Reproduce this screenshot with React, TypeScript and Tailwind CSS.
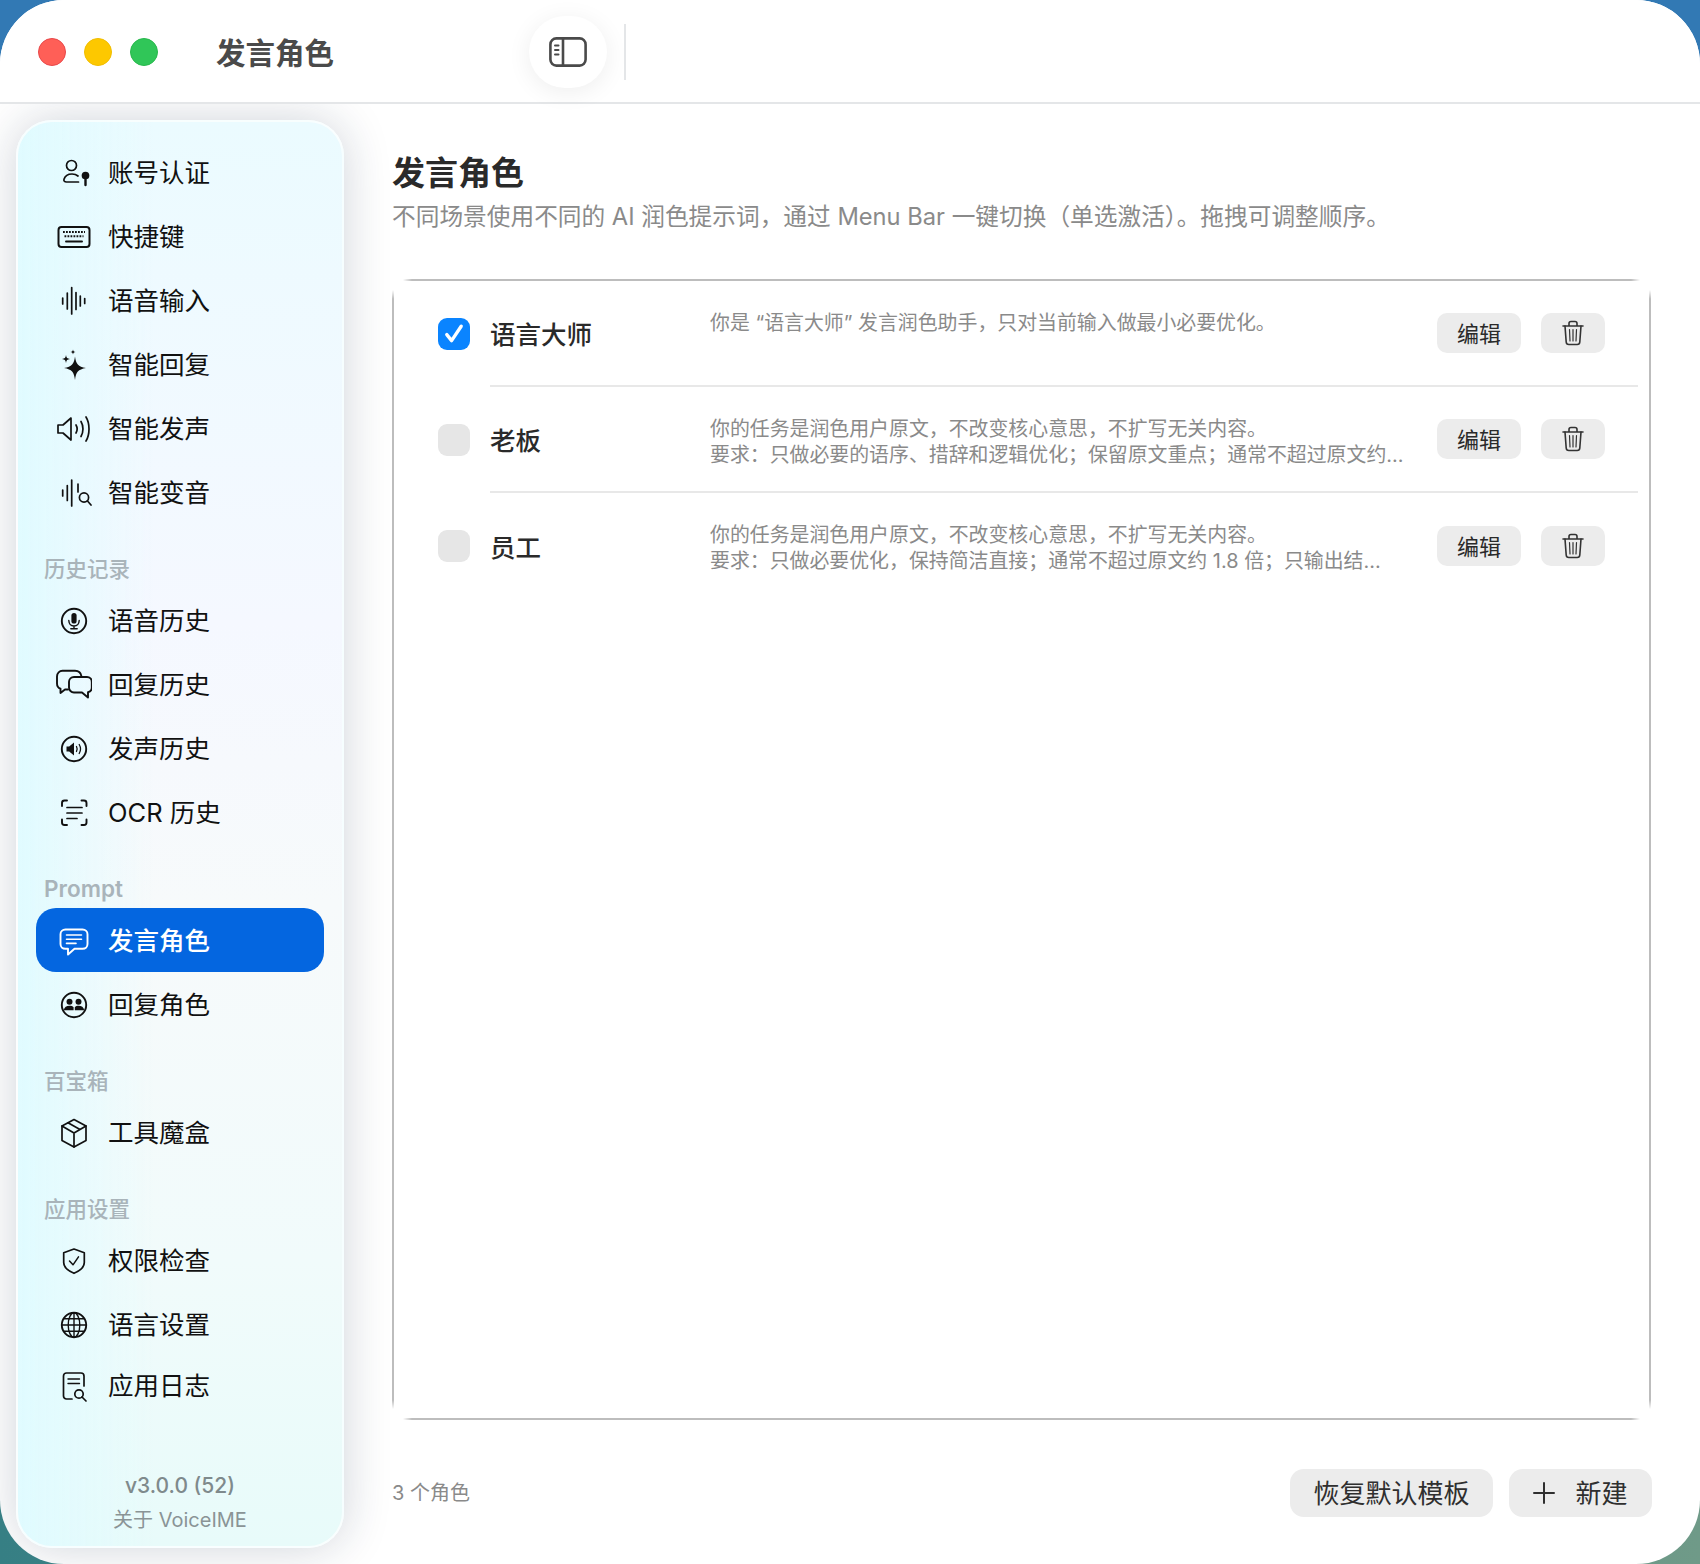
import type { ReactNode } from "react";

const Ico = ({ children, className = "text-[#111]" }: { children: ReactNode; className?: string }) => (
  <svg viewBox="0 0 36 36" className={`w-9 h-9 shrink-0 mt-0.5 ${className}`} fill="none" stroke="currentColor" strokeWidth="1.7" strokeLinecap="round" strokeLinejoin="round">
    {children}
  </svg>
);

const PersonKey = () => (
  <Ico>
    <circle cx="15.5" cy="10.5" r="5" />
    <path d="M22.5 27H10.5C8.5 27 7.5 26 8 24.3C9 21 12 19 16 19C18.5 19 20.5 19.7 22 21" />
    <circle cx="29.5" cy="20.5" r="3" fill="currentColor" />
    <path d="M29.5 22V30" strokeWidth="2.4" />
  </Ico>
);
const Keyboard = () => (
  <Ico>
    <rect x="2.5" y="8" width="31" height="20" rx="3" strokeWidth="2" />
    <path d="M7 13H29M8.5 17.2H27.5" strokeWidth="2.1" strokeDasharray="1.8 1.2" strokeLinecap="butt" />
    <path d="M10 22.5H26" strokeWidth="1.9" />
  </Ico>
);
const Wave = () => (
  <Ico>
    <path d="M6.7 15V21M11.3 10V26M15.7 4.5V31M20 9.5V26.5M24.3 13V23M28.7 15.5V20.5" />
  </Ico>
);
const Sparkles = () => (
  <Ico>
    <path d="M19 9.5C20 17 22 19.5 30 21C22 22.5 20 25 19 33C18 25 16 22.5 8 21C16 19.5 18 17 19 9.5Z" fill="currentColor" stroke="none" />
    <path d="M10 8C10.4 10.8 11.2 11.6 14 12C11.2 12.4 10.4 13.2 10 16C9.6 13.2 8.8 12.4 6 12C8.8 11.6 9.6 10.8 10 8Z" fill="currentColor" stroke="none" />
    <path d="M17 2.5C17.2 4 18 4.8 19.5 5C18 5.2 17.2 6 17 7.5C16.8 6 16 5.2 14.5 5C16 4.8 16.8 4 17 2.5Z" fill="currentColor" stroke="none" />
  </Ico>
);
const Speaker = () => (
  <Ico>
    <path d="M2 14V22H7L15 29V7L7 14H2Z" />
    <path d="M20 14C21.4 16.4 21.4 19.6 20 22" />
    <path d="M25 10.5C27.6 14.8 27.6 21.2 25 25.5" />
    <path d="M30 6C34 12.5 34 23.5 30 30" />
  </Ico>
);
const WaveSearch = () => (
  <Ico>
    <path d="M6.7 15V21M11.3 10.5V25.5M15.7 5V31M22 9V17" />
    <circle cx="28" cy="22.5" r="4.6" />
    <path d="M31.5 26L35 30" />
  </Ico>
);
const MicCircle = () => (
  <Ico>
    <circle cx="18" cy="18" r="12.2" strokeWidth="1.9" />
    <rect x="15.4" y="10" width="5.2" height="10.5" rx="2.6" fill="currentColor" stroke="none" />
    <path d="M12.8 17.5C13 21 15 23 18 23C21 23 23 21 23.2 17.5M18 23V25.6M14.8 25.8H21.2" strokeWidth="1.4" />
  </Ico>
);
const Bubbles = () => (
  <Ico>
    <path d="M12 22.5H9L4.5 26V21.7C2.5 21 1 19 1 16.5V9.5C1 6 3.5 3.8 6.5 3.8H19C22.5 3.8 25 6 25.5 9.5" strokeWidth="1.9" />
    <path d="M18 10H31C33.8 10 35.8 12 35.8 15V20.5C35.8 23 34.5 24.7 32 25.2V30.5L26 25.5H18C15.2 25.5 13 23.2 13 20.5V15C13 12 15.2 10 18 10Z" strokeWidth="1.9" />
  </Ico>
);
const SpeakerCircle = () => (
  <Ico>
    <circle cx="18" cy="18" r="12.2" strokeWidth="1.9" />
    <path d="M10.5 15.5V20.5H13.2L18 24.5V11.5L13.2 15.5H10.5Z" fill="currentColor" stroke="none" />
    <path d="M20.5 15.5C21.3 17 21.3 19 20.5 20.5M23.2 13.5C24.8 16.2 24.8 19.8 23.2 22.5" strokeWidth="1.3" />
  </Ico>
);
const ScanText = () => (
  <Ico>
    <path d="M11 5.5H8.5C7 5.5 6 6.5 6 8V11M25.5 5.5H28C29.5 5.5 30.5 6.5 30.5 8V11M6 24.5V27.5C6 29 7 30 8.5 30H11M30.5 24.5V27.5C30.5 29 29.5 30 28 30H25.5" strokeWidth="1.9" />
    <path d="M11 12.5H26M11 18H26M11 23.5H21" />
  </Ico>
);
const TextBubble = () => (
  <Ico className="text-white">
    <path d="M9.5 6.5H26.5C29.5 6.5 31.5 8.5 31.5 11.2V21C31.5 23.8 29.5 25.8 26.5 25.8H18.5L12 31.5V25.8H9.5C6.5 25.8 4.5 23.8 4.5 21V11.2C4.5 8.5 6.5 6.5 9.5 6.5Z" strokeWidth="1.9" />
    <path d="M10.5 12H25.5M10.5 16.2H25.5M10.5 20.4H20" strokeWidth="1.6" />
  </Ico>
);
const PeopleCircle = () => (
  <Ico>
    <circle cx="18" cy="18" r="12.2" strokeWidth="1.9" />
    <circle cx="13.5" cy="14.8" r="3" fill="currentColor" stroke="none" />
    <circle cx="22.5" cy="14.8" r="3" fill="currentColor" stroke="none" />
    <path d="M7.8 23.2C8.2 20.2 10.5 18.8 13.5 18.8C15.2 18.8 16.6 19.2 17.6 20.2V23.2H7.8ZM18.8 23.2V20.2C19.8 19.2 20.9 18.8 22.5 18.8C25.5 18.8 27.8 20.2 28.2 23.2H18.8Z" fill="currentColor" stroke="none" />
  </Ico>
);
const Box = () => (
  <Ico>
    <path d="M18 4.5L30 11V25.5L18 32L6 25.5V11L18 4.5Z" />
    <path d="M6 11L18 18L30 11M18 18V32M12 7.8L24 14.6" />
  </Ico>
);
const ShieldCheck = () => (
  <Ico>
    <path d="M18 6L28.3 9.8V19.5C28.3 24 24.5 27.5 18 30.3C11.5 27.5 7.7 24 7.7 19.5V9.8L18 6Z" />
    <path d="M13.5 18L17 21.8L22.5 13.8" strokeWidth="1.5" />
  </Ico>
);
const Globe = () => (
  <Ico>
    <circle cx="18" cy="18" r="12.2" strokeWidth="1.9" />
    <ellipse cx="18" cy="18" rx="5.8" ry="12.2" strokeWidth="1.4" />
    <path d="M18 5.8V30.2M5.8 18H30.2M7.6 11.8H28.4M7.6 24.2H28.4" strokeWidth="1.4" />
  </Ico>
);
const DocSearch = () => (
  <Ico>
    <path d="M16 31H10.5C8.8 31 7.5 29.7 7.5 28V8C7.5 6.3 8.8 5 10.5 5H25C26.7 5 28 6.3 28 8V18" />
    <path d="M12 11H23.5M12 15.5H23.5" strokeWidth="1.4" />
    <circle cx="23" cy="26" r="4.2" />
    <path d="M26 29L30 33" />
  </Ico>
);

const Trash = () => (
  <svg viewBox="0 0 24 26" className="w-6 h-[26px] text-[#333]" fill="none" stroke="currentColor" strokeWidth="1.6" strokeLinecap="round" strokeLinejoin="round">
    <path d="M2 6H22M8 6V3.5C8 2.3 8.8 1.5 10 1.5H14C15.2 1.5 16 2.3 16 3.5V6" />
    <path d="M4 6L5.2 22C5.3 23.6 6.3 24.5 7.8 24.5H16.2C17.7 24.5 18.7 23.6 18.8 22L20 6" />
    <path d="M8.5 9.5L9 21M12 9.5V21M15.5 9.5L15 21" strokeWidth="1.2" />
  </svg>
);

type Item = { label: string; icon: ReactNode; active?: boolean; nudge?: boolean };

const NavRow = ({ item }: { item: Item }) => (
  <div className={`mx-[18px] h-16 pl-5 flex items-center gap-[16px] rounded-[20px] text-[25.5px] ${item.nudge ? "-mt-[3px]" : ""} ${item.active ? "bg-[#0466e0] text-white font-medium" : "text-[#111]"}`}>
    {item.icon}
    <span className="mt-[3px]">{item.label}</span>
  </div>
);

const NavGroup = ({ title, items }: { title: string; items: Item[] }) => (
  <div>
    <div className={`mt-[30px] mb-1 pl-[26px] h-[30px] leading-[30px] text-[#a9b4ba] ${title === "Prompt" ? "text-[22.5px] font-semibold" : "text-[21.5px] font-medium"}`}>{title}</div>
    {items.map((i) => (
      <NavRow key={i.label} item={i} />
    ))}
  </div>
);

const roles = [
  { name: "语言大师", on: true, lines: ["你是 “语言大师” 发言润色助手，只对当前输入做最小必要优化。"] },
  { name: "老板", on: false, lines: ["你的任务是润色用户原文，不改变核心意思，不扩写无关内容。", "要求：只做必要的语序、措辞和逻辑优化；保留原文重点；通常不超过原文约..."] },
  { name: "员工", on: false, lines: ["你的任务是润色用户原文，不改变核心意思，不扩写无关内容。", "要求：只做必要优化，保持简洁直接；通常不超过原文约 1.8 倍；只输出结..."] },
];

const cornerFade = "absolute w-5 h-5";

export default function App() {
  return (
    <div lang="zh-CN" className="w-[1700px] h-[1564px] overflow-hidden bg-[linear-gradient(180deg,#3279b4_0%,#3279b4_50%,rgba(50,121,180,0)_88%),linear-gradient(90deg,#367f84,#6f9a88)] [font-family:Inter,'Noto_Sans_CJK_SC',sans-serif]">
      <div className="h-full rounded-[64px] bg-white overflow-hidden flex flex-col">
        <header className="relative z-10 h-[104px] shrink-0 bg-white border-b-2 border-[#e4e6e8] flex items-center pt-0.5">
          <div className="ml-[38px] flex gap-[18px]">
            <span className="w-7 h-7 rounded-full bg-[#ff5f57] border border-[#e8484a]" />
            <span className="w-7 h-7 rounded-full bg-[#fdc800] border border-[#f0bd00]" />
            <span className="w-7 h-7 rounded-full bg-[#30c658] border border-[#28b84c]" />
          </div>
          <h1 className="ml-[58px] mt-0.5 w-[313px] text-[29.5px] font-bold text-[#4a4a4a]">发言角色</h1>
          <button className="w-[78px] h-[72px] rounded-full bg-white shadow-[0_4px_24px_rgba(0,0,0,0.07)] flex items-center justify-center">
            <svg viewBox="0 0 38 30" className="w-[38px] h-[30px] text-[#4a4a4a]" fill="none" stroke="currentColor" strokeWidth="2.6" strokeLinecap="round">
              <rect x="1.4" y="1.4" width="35.2" height="27.2" rx="6" />
              <path d="M14 2V28" />
              <path d="M6 8.5H9.5M6 13H9.5M6 17.5H9.5" strokeWidth="2" />
            </svg>
          </button>
          <div className="ml-[17px] w-0.5 h-14 bg-[#e4e6e8]" />
        </header>
        <div className="flex-1 flex min-h-0">
          <aside className="ml-4 mt-4 w-[328px] h-[1428px] shrink-0 rounded-[36px] border-2 border-white/70 flex flex-col pt-[18px] shadow-[0_0_48px_rgba(20,40,70,0.2)] bg-[linear-gradient(90deg,#e0fbff_0%,rgba(224,251,255,0)_42%),linear-gradient(180deg,#ebfbff_0%,#f5f8ff_35%,#f7fafb_55%,#f1fbfb_80%,#e8fbfa_100%)]">
            <div>
              <NavRow item={{ label: "账号认证", icon: <PersonKey /> }} />
              <NavRow item={{ label: "快捷键", icon: <Keyboard /> }} />
              <NavRow item={{ label: "语音输入", icon: <Wave /> }} />
              <NavRow item={{ label: "智能回复", icon: <Sparkles /> }} />
              <NavRow item={{ label: "智能发声", icon: <Speaker /> }} />
              <NavRow item={{ label: "智能变音", icon: <WaveSearch /> }} />
            </div>
            <NavGroup title="历史记录" items={[
              { label: "语音历史", icon: <MicCircle /> },
              { label: "回复历史", icon: <Bubbles /> },
              { label: "发声历史", icon: <SpeakerCircle /> },
              { label: "OCR 历史", icon: <ScanText /> },
            ]} />
            <NavGroup title="Prompt" items={[
              { label: "发言角色", icon: <TextBubble />, active: true },
              { label: "回复角色", icon: <PeopleCircle /> },
            ]} />
            <NavGroup title="百宝箱" items={[{ label: "工具魔盒", icon: <Box /> }]} />
            <NavGroup title="应用设置" items={[
              { label: "权限检查", icon: <ShieldCheck /> },
              { label: "语言设置", icon: <Globe /> },
              { label: "应用日志", icon: <DocSearch />, nudge: true },
            ]} />
            <div className="mt-auto pb-[9px] text-center">
              <div className="text-[21px] font-medium leading-[34px] text-[#7f8a8c]">v3.0.0 (52)</div>
              <div className="text-[20px] leading-[34px] text-[#8a9496]">关于 VoiceIME</div>
            </div>
          </aside>

          <main className="flex-1 min-w-0 pl-[48px] pr-[49px] pt-[49px] flex flex-col">
            <h2 className="text-[33px] leading-10 font-bold text-[#2a2a2a]">发言角色</h2>
            <p className="mt-2 text-[23.7px] leading-8 text-[#8a8a8a]">不同场景使用不同的 AI 润色提示词，通过 Menu Bar 一键切换（单选激活）。拖拽可调整顺序。</p>

            <section className="relative mt-[46px] h-[1141px] shrink-0 border-2 border-[#bdbdbd]">
              <span className={`${cornerFade} -top-0.5 -left-0.5 bg-[radial-gradient(circle_at_top_left,white_11px,rgba(255,255,255,0)_20px)]`} />
              <span className={`${cornerFade} -top-0.5 -right-0.5 bg-[radial-gradient(circle_at_top_right,white_11px,rgba(255,255,255,0)_20px)]`} />
              <span className={`${cornerFade} -bottom-0.5 -left-0.5 bg-[radial-gradient(circle_at_bottom_left,white_11px,rgba(255,255,255,0)_20px)]`} />
              <span className={`${cornerFade} -bottom-0.5 -right-0.5 bg-[radial-gradient(circle_at_bottom_right,white_11px,rgba(255,255,255,0)_20px)]`} />
              {roles.map((r, i) => (
                <div key={r.name} className="relative flex pl-[44px] pr-[11px]">
                  {r.on ? (
                    <span className="self-center mr-5 w-8 h-8 rounded-[9px] bg-[#0a84ff] flex items-center justify-center">
                      <svg viewBox="0 0 20 20" className="w-6 h-6" fill="none" stroke="white" strokeWidth="2.8" strokeLinecap="round" strokeLinejoin="round">
                        <path d="M4 10.5L8 15.5L16 3.5" />
                      </svg>
                    </span>
                  ) : (
                    <span className="self-center mr-5 w-8 h-8 rounded-[9px] bg-[#e6e6e6]" />
                  )}
                  <div className={`flex-1 h-[106px] flex items-center pr-[33px] ${i < 2 ? "border-b-2 border-[#e8e8e8]" : ""}`}>
                    <div className="w-[220px] mt-1 text-[25.5px] font-medium text-[#2a2a2a]">{r.name}</div>
                    <div className="flex-1 self-start pt-[29px] text-[19.9px] leading-[26px] text-[#8a8a8a] whitespace-nowrap">
                      {r.lines.map((l) => (
                        <div key={l}>{l}</div>
                      ))}
                    </div>
                    <button className="w-[84px] h-10 rounded-[10px] bg-[#ececec] text-[22px] text-[#2a2a2a]"><span className="relative top-px">编辑</span></button>
                    <button className="ml-5 w-16 h-10 rounded-[10px] bg-[#ececec] flex items-center justify-center">
                      <Trash />
                    </button>
                  </div>
                </div>
              ))}
            </section>

            <footer className="mt-[49px] -mr-px flex items-center">
              <span className="text-[20px] text-[#8a8a8a]">3 个角色</span>
              <button className="ml-auto w-[203px] h-12 rounded-[14px] bg-[#ececec] text-[26px] text-[#2f2f2f]">恢复默认模板</button>
              <button className="ml-4 w-[143px] h-12 rounded-[14px] bg-[#ececec] text-[26px] text-[#2f2f2f] flex items-center justify-center gap-5">
                <svg viewBox="0 0 22 22" className="w-[22px] h-[22px]" fill="none" stroke="currentColor" strokeWidth="2" strokeLinecap="round">
                  <path d="M11 1V21M1 11H21" />
                </svg>
                <span>新建</span>
              </button>
            </footer>
          </main>
        </div>
      </div>
    </div>
  );
}
